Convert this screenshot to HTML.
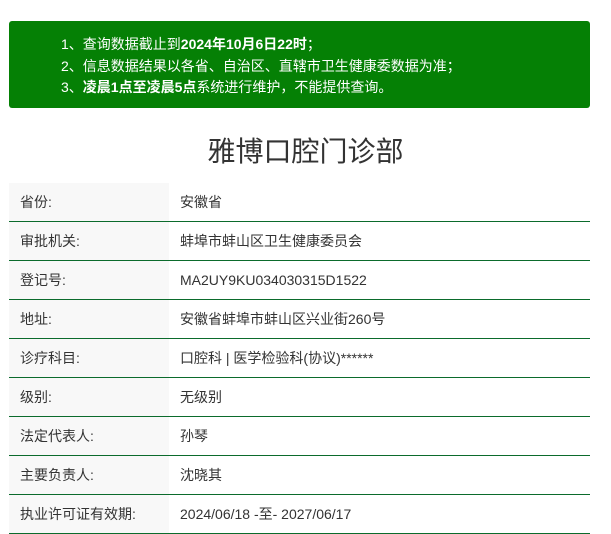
<!DOCTYPE html>
<html><head><meta charset="utf-8"><style>
body{margin:0;background:#fff;font-family:"Liberation Sans","Noto Sans CJK SC",sans-serif;width:611px;height:534px;overflow:hidden;position:relative}
.box{position:absolute;left:9px;top:21px;width:581px;height:87px;background:#058005;border-radius:3px;color:#fff;font-size:14px}
.box div{position:absolute;left:52px;white-space:nowrap}
h1{position:absolute;top:132px;left:0;width:611px;margin:0;text-align:center;font-weight:normal;font-size:28px;color:#333;line-height:40px}
table{position:absolute;left:9px;top:183px;width:581px;border-collapse:collapse;font-size:14px;color:#333}
td{height:38px;border-bottom:1px solid #0b6b2c;padding:0}
td.l{width:160px;background:#f8f8f8;padding-left:11px;box-sizing:border-box}
td.v{padding-left:11px}
</style></head><body>
<div class="box">
<div style="top:13px">1、查询数据截止到<b>2024年10月6日22时</b>；</div>
<div style="top:35px">2、信息数据结果以各省、自治区、直辖市卫生健康委数据为准；</div>
<div style="top:56px">3、<b>凌晨1点至凌晨5点</b>系统进行维护，不能提供查询。</div>
</div>
<h1>雅博口腔门诊部</h1>
<table>
<tr><td class="l">省份:</td><td class="v">安徽省</td></tr>
<tr><td class="l">审批机关:</td><td class="v">蚌埠市蚌山区卫生健康委员会</td></tr>
<tr><td class="l">登记号:</td><td class="v">MA2UY9KU034030315D1522</td></tr>
<tr><td class="l">地址:</td><td class="v">安徽省蚌埠市蚌山区兴业街260号</td></tr>
<tr><td class="l">诊疗科目:</td><td class="v">口腔科 | 医学检验科(协议)******</td></tr>
<tr><td class="l">级别:</td><td class="v">无级别</td></tr>
<tr><td class="l">法定代表人:</td><td class="v">孙琴</td></tr>
<tr><td class="l">主要负责人:</td><td class="v">沈晓其</td></tr>
<tr><td class="l">执业许可证有效期:</td><td class="v">2024/06/18 -至- 2027/06/17</td></tr>
</table>
</body></html>
